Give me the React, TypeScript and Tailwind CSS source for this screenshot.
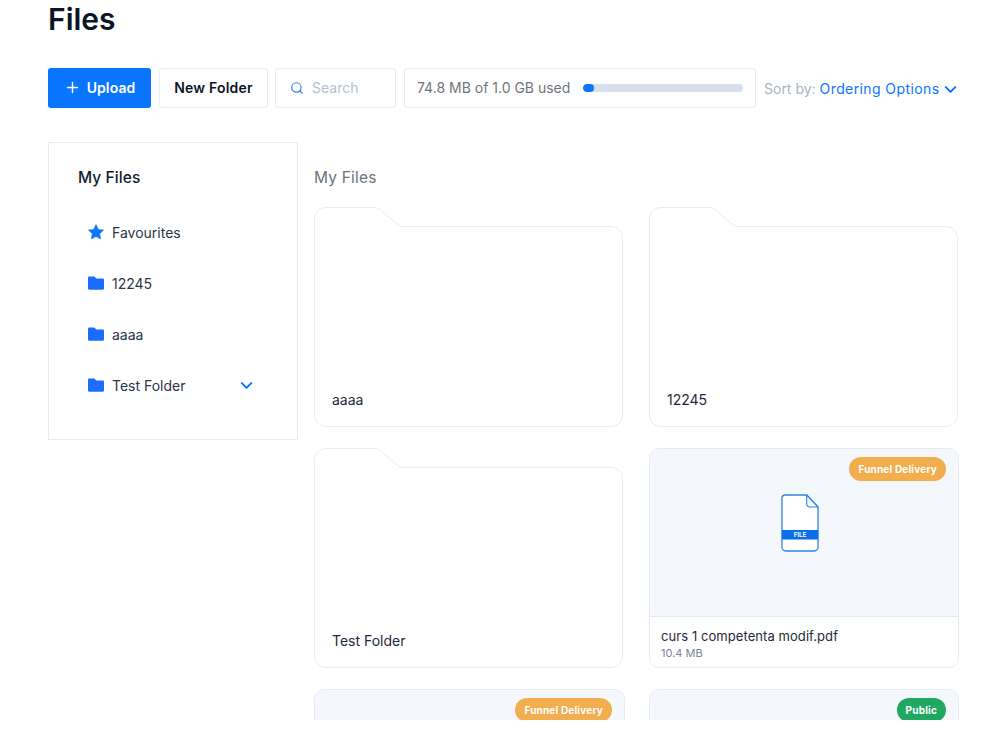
import { ChevronDown, Plus, Search } from "lucide-react";

function FolderIcon() {
    return (
        <svg width="16" height="14" viewBox="0 0 16 14" className="shrink-0">
            <path d="M1.2 0.5h4.6c.4 0 .7.1 1 .4L8.4 2.5h6.4c.7 0 1.2.5 1.2 1.2v8.9c0 .7-.5 1.2-1.2 1.2H1.2C.5 13.800 0 13.300 0 12.600V1.700C0 1 .5.500 1.200.500z" fill="#1a6dff" />
        </svg>
    );
}

function StarIcon() {
    return (
        <svg width="16" height="16" viewBox="0 0 16 16" className="shrink-0">
            <path d="M8 .6l2.300 4.800 5.200.7-3.800 3.600.95 5.200L8 12.400l-4.650 2.500.95-5.200L.5 6.100l5.200-.7z" fill="#0a75ff" stroke="#0a75ff" strokeWidth="0.6" strokeLinejoin="round" />
        </svg>
    );
}

function SideItem({ icon, label, open }: { icon: React.ReactNode; label: string; open?: boolean }) {
    return (
        <div className="flex h-[51px] items-center pb-[1px] pl-[39px] pr-[44px]">
            <span className="flex w-[24px] items-center">{icon}</span>
            <span className="flex-1 text-[14px] text-[#2a3547]">{label}</span>
            {open && <ChevronDown className="-mx-[3px] h-[19px] w-[19px] text-[#0a75ff]" strokeWidth={2.6} />}
        </div>
    );
}

function FolderCard({ name }: { name: string }) {
    return (
        <div className="relative flex h-[220px] w-[309px] items-end px-[18px] pb-[17px]">
            <svg width="309" height="220" viewBox="0 0 309 220" className="absolute inset-0" fill="none">
                <path
                    d="M12.500 .5H60c2.500 0 4.500.8 6.400 2.400L83 17c1.800 1.600 3.800 2.500 6.300 2.500H296.500c7 0 12 5 12 12V207.500c0 7-5 12-12 12H12.500c-7 0-12-5-12-12V12.500c0-7 5-12 12-12z"
                    stroke="#e6ebf3"
                />
            </svg>
            <span className="relative text-[14px] leading-[20px] text-[#1e293b]">{name}</span>
        </div>
    );
}

function FileGlyph() {
    return (
        <svg width="38" height="58" viewBox="0 0 40 58" preserveAspectRatio="none" fill="none">
            <path d="M4.500 1h22.500L39 13v40c0 2.200-1.800 4-4 4H5c-2.200 0-4-1.800-4-4V4.500C1 2.500 2.500 1 4.500 1z" fill="#fff" stroke="#2f86ea" strokeWidth="1.400" />
            <path d="M27 1v8.500c0 2 1.500 3.500 3.500 3.500H39z" fill="#f4f7fc" stroke="#2f86ea" strokeWidth="1.200" strokeLinejoin="round" />
            <rect x="1" y="36" width="38" height="9.500" fill="#0a6fe8" />
            <text x="20" y="43.300" textAnchor="middle" fontSize="6.500" fontWeight="800" fill="#dbe9fb" fontFamily="Inter, sans-serif">FILE</text>
        </svg>
    );
}

function Badge({ label, color }: { label: string; color: string }) {
    return (
        <span className={`absolute right-[12px] top-[8px] flex h-[24px] items-center rounded-full px-[9px] text-[10px] font-bold tracking-[0.18px] text-white ${color}`}>
            {label}
        </span>
    );
}

function FileCard({ name, size, label, color }: { name?: string; size?: string; label: string; color: string }) {
    return (
        <div className="flex h-[220px] flex-col overflow-hidden rounded-[10px] border border-[#e6ebf3] bg-white">
            <div className="relative flex h-[168px] shrink-0 items-center justify-center border-b border-[#e6ebf3] bg-[#f4f7fc] pb-[19px] pr-[9px]">
                <Badge label={label} color={color} />
                <FileGlyph />
            </div>
            {name && (
                <div className="px-[11px] pt-[10px]">
                    <p className="text-[13px] leading-[18px] tracking-[0.07px] text-[#1e293b]">{name}</p>
                    <p className="text-[11px] leading-[16px] text-[#7b8494]">{size}</p>
                </div>
            )}
        </div>
    );
}

export default function App() {
    return (
        <div className="h-[720px] overflow-hidden bg-white px-[48px] font-['Inter',sans-serif]">
            <h1 className="h-[68px] pb-[28px] text-[30px] font-semibold leading-[39px] text-[#0b1526]">Files</h1>

            <div className="flex h-[40px] items-stretch whitespace-nowrap">
                <button className="flex w-[103px] shrink-0 items-center justify-center gap-[6px] rounded-[3px] bg-[#0a75ff] pb-[2px] text-[14px] font-semibold tracking-[0.1px] text-white">
                    <Plus className="mt-[1px] h-[17px] w-[17px]" strokeWidth={2} />
                    Upload
                </button>
                <button className="ml-[8px] w-[109px] shrink-0 rounded-[3px] border border-[#e8ecf3] pb-[2px] text-[14px] font-semibold tracking-[0.2px] text-[#0b1526]">
                    New Folder
                </button>
                <div className="ml-[7px] flex w-[121px] shrink-0 items-center rounded-[3px] border border-[#e8ecf3] pb-[1px] pl-[14px] text-[14px] text-[#b4bfd0]">
                    <Search className="mr-[8px] h-[14px] w-[14px] text-[#2b7ff0]" strokeWidth={2} />
                    Search
                </div>
                <div className="ml-[8px] flex w-[352px] shrink-0 items-center rounded-[3px] border border-[#e8ecf3] pl-[12px] text-[14px] text-[#6f7580]">
                    <span className="pb-[1px]">74.8 MB of 1.0 GB used</span>
                    <div className="ml-[13px] h-[8px] w-[160px] overflow-hidden rounded-full bg-[#d6dfea]">
                        <div className="h-full w-[11px] rounded-full bg-[#0a75ff]" />
                    </div>
                </div>
                <div className="ml-[8px] flex shrink-0 items-center text-[14px]">
                    <span className="text-[#a9b3c5]">Sort by:</span>
                    <span className="ml-[4px] tracking-[0.4px] text-[#0a75ff]">Ordering Options</span>
                    <ChevronDown className="ml-[2px] mt-[2px] h-[19px] w-[19px] text-[#0a75ff]" strokeWidth={2.6} />
                </div>
            </div>

            <div className="mt-[34px] flex items-start">
                <aside className="h-[298px] w-[250px] shrink-0 border border-[#e6ebf3] pt-[24px]">
                    <h2 className="pl-[29px] text-[15.500px] font-medium leading-[22px] tracking-[0.1px] text-[#0f1b2d]">My Files</h2>
                    <div className="mt-[18px]">
                        <SideItem icon={<StarIcon />} label="Favourites" />
                        <SideItem icon={<FolderIcon />} label="12245" />
                        <SideItem icon={<FolderIcon />} label="aaaa" />
                        <SideItem icon={<FolderIcon />} label="Test Folder" open />
                    </div>
                </aside>

                <main className="ml-[16px] flex-1 pt-[25px]">
                    <h2 className="text-[15.500px] font-normal leading-[22px] tracking-[0.2px] text-[#6b7280]">My Files</h2>
                    <div className="mt-[18px] grid grid-cols-[311px_310px] gap-x-[24px] gap-y-[21px]">
                        <FolderCard name="aaaa" />
                        <FolderCard name="12245" />
                        <FolderCard name="Test Folder" />
                        <FileCard name="curs 1 competenta modif.pdf" size="10.4 MB" label="Funnel Delivery" color="bg-[#f1ad4e]" />
                        <FileCard label="Funnel Delivery" color="bg-[#f1ad4e]" />
                        <FileCard label="Public" color="bg-[#20a862]" />
                    </div>
                </main>
            </div>
        </div>
    );
}
